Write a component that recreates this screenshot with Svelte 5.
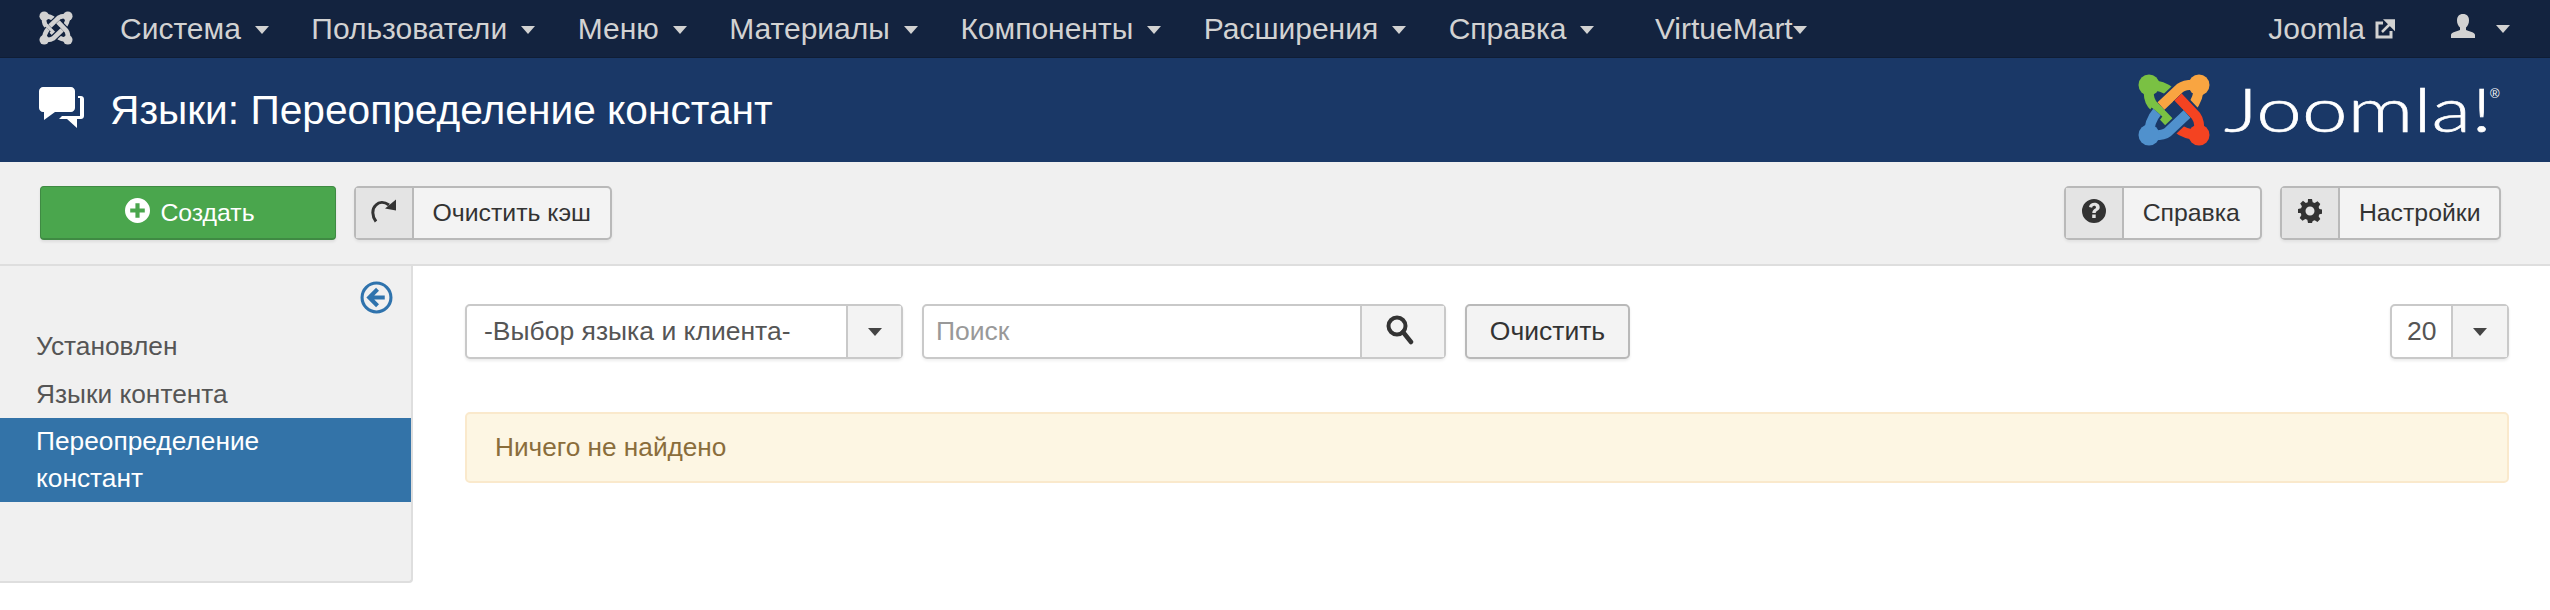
<script>
  const arm = 'M11 11 C10 20 11 26 14 30 L32 49 M11 11 C20 11 27 13 34 19';
  const logo = [
    { c: '#7ac143', r: 0 },
    { c: '#f9a541', r: 90 },
    { c: '#f44321', r: 180 },
    { c: '#5091cd', r: 270 }
  ];
  const menu = [
    ['Система', 'menu-gap'],
    ['Пользователи', 'menu-gap'],
    ['Меню', 'menu-gap'],
    ['Материалы', 'menu-gap'],
    ['Компоненты', 'menu-gap'],
    ['Расширения', 'menu-gap'],
    ['Справка', 'menu-gap wide'],
    ['VirtueMart', 'tight']
  ];
</script>

<div class="page">
  <nav class="nav">
    <svg class="nav-logo" viewBox="0 0 72 72" aria-hidden="true">
      {#each logo as p}
        <g transform="rotate({p.r} 36 36)">
          <path d={arm} fill="none" stroke="#13233f" stroke-width="15" />
          <path d={arm} fill="none" stroke="#d2d2d2" stroke-width="10" />
          <circle cx="11" cy="11" r="10" fill="#d2d2d2" />
        </g>
      {/each}
    </svg>
    <ul class="menu">
      {#each menu as [label, cls]}
        <li class={cls}>{label}<i class="caret"></i></li>
      {/each}
    </ul>
    <div class="nav-right">
      <span class="site">Joomla</span>
      <svg class="ext" viewBox="0 0 20 20" aria-hidden="true">
        <path d="M8 4H2v14h14v-6" fill="none" stroke="#d2d2d2" stroke-width="3" />
        <path d="M7 13 16 4M11 1.500h8.500V10z" fill="#d2d2d2" stroke="#d2d2d2" stroke-width="2.500" />
      </svg>
      <svg class="user" viewBox="0 0 24 24" aria-hidden="true">
        <path d="M12 0c4 0 6 2.500 6 6.500 0 3-1.300 5.500-3 7v2.500c3 1.200 9 2.300 9 5v3H0v-3c0-2.700 6-3.800 9-5v-2.500c-1.700-1.500-3-4-3-7C6 2.500 8 0 12 0z" fill="#d2d2d2" />
      </svg>
      <i class="caret"></i>
    </div>
  </nav>

  <header class="head">
    <svg class="comments" viewBox="0 0 46 42" aria-hidden="true">
      <path d="M4 0h28c2 0 4 2 4 4v17c0 2-2 4-4 4H16L5 33v-8H4c-2 0-4-2-4-4V4c0-2 2-4 4-4z" fill="#fff" />
      <path d="M39 9h3c1.500 0 3 1 3 3v17c0 2-1.500 3-3 3h-4v9L28 32h-8l3-3h18V11h-2z" fill="#fff" />
    </svg>
    <h1>Языки: Переопределение констант</h1>
    <div class="brand">
      <svg class="brand-mark" viewBox="0 0 72 72" aria-hidden="true">
        {#each logo as p}
          <g transform="rotate({p.r} 36 36)">
            <path d={arm} fill="none" stroke="#1a3867" stroke-width="14" />
            <path d={arm} fill="none" stroke={p.c} stroke-width="10" />
            <circle cx="11" cy="11" r="10.500" fill={p.c} />
          </g>
        {/each}
      </svg>
      <div class="wordmark">
        <span class="word">Joomla!</span>
        <span class="reg">®</span>
      </div>
    </div>
  </header>

  <section class="toolbar">
    <button class="btn create">
      <svg class="ic-14" viewBox="0 0 24 24" aria-hidden="true">
        <path fill-rule="evenodd" d="M12 0a12 12 0 1 0 0 24 12 12 0 0 0 0-24zM10 5h4v5h5v4h-5v5h-4v-5H5v-4h5z" fill="#fff" />
      </svg>
      Создать
    </button>
    <div class="group first">
      <span class="tile">
        <svg class="ic-refresh" viewBox="0 0 26 24" aria-hidden="true">
          <path d="M5 22.500C1 17 .5 10 5 6c3-3 8-3.500 13 0" fill="none" stroke="#333" stroke-width="3" />
          <path d="M25 .5v11L14 9.500z" fill="#333" />
        </svg>
      </span>
      <span class="lbl">Очистить кэш</span>
    </div>
    <div class="spacer"></div>
    <div class="group help">
      <span class="tile wide">
        <svg class="ic-24" viewBox="0 0 24 24" aria-hidden="true">
          <path fill-rule="evenodd" d="M12 0a12 12 0 1 0 0 24 12 12 0 0 0 0-24zM7 8c.5-3 3-4.200 5.400-4.200 3 0 5.300 1.700 5.300 4.400 0 3.600-4 3.300-4 5.800h-3.400c0-4 3.700-3.800 3.700-5.700 0-1-.8-1.500-1.800-1.500-1.200 0-1.900.7-2.100 2zM10.200 15.500h3.500V19h-3.500z" fill="#333" />
        </svg>
      </span>
      <span class="lbl">Справка</span>
    </div>
    <div class="group">
      <span class="tile wide">
        <svg class="ic-24" viewBox="0 0 24 24" aria-hidden="true">
          <path fill-rule="evenodd" d="M10 0h4l.7 3.200 2 .8L19.500 2.300l2.800 2.800-1.700 2.800.8 2 3.100.7v4l-3.100.7-.8 2 1.700 2.800-2.800 2.800-2.800-1.700-2 .8L14 24h-4l-.7-3.200-2-.8-2.800 1.700-2.800-2.800 1.700-2.800-.8-2L0 14v-4l3.100-.7.8-2-1.700-2.800 2.800-2.800L7.800 4l2-.8zM12 7.500a4.500 4.500 0 1 0 0 9 4.500 4.500 0 0 0 0-9z" fill="#333" />
        </svg>
      </span>
      <span class="lbl">Настройки</span>
    </div>
  </section>

  <main class="body">
    <aside class="side">
      <div class="toggle">
        <svg viewBox="0 0 32 32" aria-hidden="true">
          <circle cx="16" cy="16" r="14" fill="none" stroke="#2f73ad" stroke-width="3" />
          <path d="M17 8 9 16l8 8M10 16h14" fill="none" stroke="#2f73ad" stroke-width="4" />
        </svg>
      </div>
      <ul class="side-list">
        <li>Установлен</li>
        <li>Языки контента</li>
        <li class="active">Переопределение<br />констант</li>
      </ul>
    </aside>

    <div class="content">
      <div class="filters">
        <div class="select">
          <span class="sel-text">-Выбор языка и клиента-</span>
          <span class="sel-arrow"><i class="caret dark"></i></span>
        </div>
        <div class="search">
          <span class="placeholder">Поиск</span>
          <span class="search-btn">
            <svg class="ic-search" viewBox="0 0 28 30" aria-hidden="true">
              <circle cx="11" cy="11" r="8.500" fill="none" stroke="#333" stroke-width="4" />
              <path d="m17 17 8 10" fill="none" stroke="#333" stroke-width="4.500" stroke-linecap="round" />
            </svg>
          </span>
        </div>
        <button class="clear">Очистить</button>
        <div class="spacer"></div>
        <div class="limit">
          <span class="limit-val">20</span>
          <span class="limit-arrow"><i class="caret dark"></i></span>
        </div>
      </div>
      <div class="alert">Ничего не найдено</div>
    </div>
  </main>
</div>

<style>
  :global(body) {
    margin: 0;
    background: #fff;
  }
  .page {
    width: 2550px;
    height: 610px;
    overflow: hidden;
    font-family: "Liberation Sans", Arial, sans-serif;
    color: #333;
  }
  ul {
    list-style: none;
    margin: 0;
    padding: 0;
  }
  i.caret {
    display: inline-block;
    width: 0;
    height: 0;
    border-left: 7.500px solid transparent;
    border-right: 7.500px solid transparent;
    border-top: 8px solid #d2d2d2;
  }
  i.caret.dark {
    border-top-color: #444;
  }

  /* top nav */
  .nav {
    height: 58px;
    box-sizing: border-box;
    background: #13233f;
    border-bottom: 1px solid #0f1d35;
    display: flex;
    align-items: center;
    color: #d2d2d2;
    font-size: 30px;
  }
  .nav-logo {
    width: 34px;
    height: 34px;
    margin: 0 0 2px 39px;
  }
  .menu {
    display: flex;
    margin-left: 47px;
    align-items: center;
  }
  .menu li {
    display: flex;
    align-items: center;
    white-space: nowrap;
    line-height: 54px;
  }
  .menu li i {
    margin-left: 14px;
    margin-top: 3px;
  }
  .menu li.menu-gap {
    margin-right: 42.500px;
  }
  .menu li.wide {
    margin-right: 60.500px;
  }
  .menu li.tight i {
    margin-left: 0;
  }
  .nav-right {
    margin-left: auto;
    display: flex;
    align-items: center;
    padding-right: 40px;
  }
  .ext {
    width: 20px;
    height: 20px;
    margin-left: 10px;
  }
  .user {
    width: 24px;
    height: 24px;
    margin: 0 21px 6px 56px;
  }

  /* title bar */
  .head {
    height: 104px;
    background: #1a3867;
    display: flex;
    align-items: center;
    color: #fff;
  }
  .comments {
    width: 46px;
    height: 42px;
    margin: 0 0 4px 39px;
    flex: none;
  }
  h1 {
    margin: 0 0 0 25px;
    font-size: 40.700px;
    font-weight: 400;
    line-height: 1;
  }
  .brand {
    margin-left: auto;
    display: flex;
    align-items: center;
    padding-right: 50px;
  }
  .brand-mark {
    width: 72px;
    height: 72px;
  }
  .wordmark {
    position: relative;
    width: 276px;
    height: 72px;
    margin-left: 14px;
  }
  .word {
    display: block;
    width: 200px;
    font-family: Lato, sans-serif;
    font-weight: 300;
    font-size: 62px;
    line-height: 68px;
    -webkit-text-stroke: 0.6px #fff;
    transform: scaleX(1.32);
    transform-origin: left center;
  }
  .reg {
    position: absolute;
    left: 266px;
    top: 12px;
    font-size: 13px;
    line-height: 16px;
  }

  /* toolbar */
  .toolbar {
    height: 104px;
    box-sizing: border-box;
    background: #f0f0f0;
    border-bottom: 2px solid #dedede;
    display: flex;
    align-items: center;
    padding: 0 49px 0 40px;
    font-size: 24.800px;
  }
  .spacer {
    flex: 1;
  }
  button {
    font: inherit;
  }
  .btn.create {
    width: 296px;
    height: 54px;
    box-sizing: border-box;
    background: #4aa64d;
    border: 1px solid #3f8a43;
    border-bottom-width: 2px;
    border-radius: 4px;
    color: #fff;
    display: flex;
    align-items: center;
    justify-content: center;
    gap: 10px;
    padding: 0 0 0 4px;
    box-shadow: 0 2px 3px rgba(0, 0, 0, 0.08);
  }
  .ic-14 {
    width: 25px;
    height: 25px;
    margin-top: -4px;
  }
  .group {
    height: 54px;
    box-sizing: border-box;
    border: 2px solid #b9b9b9;
    border-radius: 5px;
    background: #f3f3f3;
    display: flex;
    align-items: stretch;
    box-shadow: 0 2px 3px rgba(0, 0, 0, 0.06);
  }
  .group.first {
    margin-left: 18px;
  }
  .group.help {
    margin-right: 18px;
  }
  .group.help .lbl {
    padding-right: 20.500px;
  }
  .tile {
    width: 56px;
    background: #e4e4e4;
    border-right: 2px solid #b9b9b9;
    display: flex;
    align-items: center;
    justify-content: center;
  }
  .tile.wide {
    width: 56px;
  }
  .lbl {
    display: flex;
    align-items: center;
    padding: 0 18.500px;
  }
  .ic-refresh {
    width: 26px;
    height: 24px;
    margin-top: -4px;
  }
  .ic-24 {
    width: 24px;
    height: 24px;
    margin-top: -4px;
  }

  /* body */
  .body {
    display: flex;
    align-items: flex-start;
  }
  .side {
    width: 413px;
    height: 317px;
    box-sizing: border-box;
    background: #f0f0f0;
    border-right: 2px solid #dedede;
    border-bottom: 2px solid #dedede;
    border-bottom-right-radius: 4px;
    flex: none;
    font-size: 26.300px;
  }
  .toggle {
    display: flex;
    justify-content: flex-end;
    padding: 15px 18px 0 0;
    height: 33px;
  }
  .toggle svg {
    width: 33px;
    height: 33px;
  }
  .side-list {
    margin-top: 8px;
  }
  .side-list li {
    padding: 8px 36px 0;
    height: 48px;
    box-sizing: border-box;
    line-height: 32px;
    color: #555;
  }
  .side-list li.active {
    background: #3373a8;
    color: #fff;
    height: 84px;
    line-height: 37px;
    padding: 5px 36px 0;
  }

  .content {
    flex: 1;
    padding: 38px 41px 0 52px;
    font-size: 26.500px;
  }
  .filters {
    display: flex;
    height: 55px;
    align-items: stretch;
  }
  .select {
    width: 438px;
    box-sizing: border-box;
    border: 2px solid #c9c9c9;
    border-radius: 5px;
    display: flex;
    box-shadow: 0 2px 3px rgba(0, 0, 0, 0.08);
    background: #fff;
  }
  .sel-text {
    flex: 1;
    display: flex;
    align-items: center;
    padding-left: 17px;
    color: #555;
  }
  .sel-arrow {
    width: 53px;
    flex: none;
    background: #f3f3f3;
    border-left: 2px solid #c9c9c9;
    display: flex;
    align-items: center;
    justify-content: center;
  }
  .search {
    width: 524px;
    margin-left: 19px;
    box-sizing: border-box;
    border: 2px solid #c9c9c9;
    border-radius: 5px;
    display: flex;
    background: #fff;
    box-shadow: 0 2px 3px rgba(0, 0, 0, 0.06);
  }
  .placeholder {
    flex: 1;
    display: flex;
    align-items: center;
    padding-left: 12px;
    color: #999;
  }
  .search-btn {
    width: 82px;
    background: #f3f3f3;
    border-left: 2px solid #c9c9c9;
    display: flex;
    align-items: center;
    justify-content: center;
  }
  .ic-search {
    width: 28px;
    height: 30px;
    margin: 0 6px 4px 0;
  }
  .clear {
    width: 165px;
    margin-left: 19px;
    box-sizing: border-box;
    border: 2px solid #b9b9b9;
    border-radius: 5px;
    background: #f3f3f3;
    color: #333;
    padding: 0;
    box-shadow: 0 2px 3px rgba(0, 0, 0, 0.08);
  }
  .limit {
    width: 119px;
    box-sizing: border-box;
    border: 2px solid #c9c9c9;
    border-radius: 5px;
    display: flex;
    box-shadow: 0 2px 3px rgba(0, 0, 0, 0.08);
  }
  .limit-val {
    flex: 1;
    display: flex;
    align-items: center;
    padding-left: 15px;
    color: #555;
  }
  .limit-arrow {
    width: 54px;
    background: #f3f3f3;
    border-left: 2px solid #c9c9c9;
    display: flex;
    align-items: center;
    justify-content: center;
  }
  .alert {
    margin-top: 53px;
    height: 71px;
    box-sizing: border-box;
    background: #fdf6e3;
    border: 2px solid #fae9cc;
    border-radius: 5px;
    color: #8a6d3b;
    display: flex;
    align-items: center;
    padding-left: 28px;
    font-size: 26.200px;
  }
</style>
